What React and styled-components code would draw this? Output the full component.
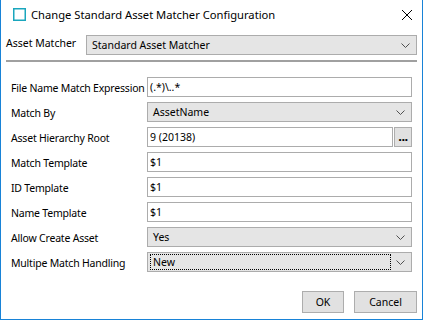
import React from 'react'
import styled, { createGlobalStyle } from 'styled-components'

const GlobalStyle = createGlobalStyle`
  html, body {
    margin: 0;
    padding: 0;
    background: #ffffff;
  }
  body {
    font-family: 'Noto Sans', 'Liberation Sans', sans-serif;
    font-size: 10.5px;
    color: #000000;
    white-space: nowrap;
  }
`

const Window = styled.div`
  box-sizing: border-box;
  width: 423px;
  height: 320px;
  background: #ffffff;
  border: 1px solid #1883d7;
  border-top: none;
  display: flex;
  flex-direction: column;
`

const TitleBar = styled.div`
  height: 29px;
  display: flex;
  align-items: center;
  padding: 0 10px 0 12px;
  flex-shrink: 0;
`

const TitleText = styled.div`
  flex: 1;
  margin-left: 5px;
  font-size: 11.2px;
  line-height: 16px;
  margin-top: 1px;
`

const CloseButton = styled.div`
  width: 10px;
  height: 10px;
  display: flex;
`

const Body = styled.div`
  flex: 1;
  display: flex;
  flex-direction: column;
  padding: 6px 5px 0 5px;
`

const TopRow = styled.div`
  display: flex;
  align-items: center;
  height: 20px;
`

const TopLabel = styled.div`
  width: 80px;
  line-height: 14px;
  margin-top: -5px;
`

const Separator = styled.div`
  height: 0;
  border-top: 2px solid #a0a0a0;
  margin: 5px 0 0 0;
`

const Form = styled.div`
  display: grid;
  grid-template-columns: 136px 265px;
  grid-auto-rows: 20px;
  row-gap: 5px;
  margin-top: 15px;
  padding-left: 5px;
  align-items: center;
`

const Label = styled.div`
  line-height: 14px;
  letter-spacing: -0.2px;
  margin-top: 2px;
`

const TextInput = styled.div`
  box-sizing: border-box;
  height: 20px;
  border: 1px solid #acacac;
  background: #ffffff;
  padding: 0 2px;
  display: flex;
  align-items: center;
  line-height: 14px;
  flex: ${p => (p.$grow ? 1 : 'none')};
`

const Combo = styled.div`
  box-sizing: border-box;
  height: 20px;
  border: 1px solid #acacac;
  background: #e5e5e5;
  display: flex;
  align-items: center;
  padding: 0 3px 0 2px;
  flex: 1;
`

const ComboValue = styled.div`
  flex: 1;
  box-sizing: border-box;
  height: 16px;
  line-height: 14px;
  padding: 0 0 0 2px;
  border: 1px dotted ${p => (p.$focused ? '#000000' : 'transparent')};
  margin-right: 2px;
`

const Chevron = styled.div`
  width: 15px;
  display: flex;
  justify-content: center;
  align-items: center;
`

const BrowseRow = styled.div`
  display: flex;
  gap: 1px;
  height: 20px;
`

const BrowseButton = styled.div`
  box-sizing: border-box;
  width: 18px;
  height: 20px;
  border: 1px solid #adadad;
  background: #e1e1e1;
  display: flex;
  align-items: flex-end;
  justify-content: center;
  font-weight: bold;
  font-size: 13px;
  line-height: 13px;
  padding-bottom: 3px;
  letter-spacing: -0.5px;
`

const Footer = styled.div`
  margin-top: auto;
  display: flex;
  justify-content: flex-end;
  gap: 10px;
  padding: 0 0 6px 0;
`

const Button = styled.div`
  box-sizing: border-box;
  width: ${p => p.$w}px;
  height: 22px;
  border: 1px solid #adadad;
  background: #e1e1e1;
  display: flex;
  align-items: center;
  justify-content: center;
`

const ChevronIcon = () => (
  <svg width="9" height="5" viewBox="0 0 9 5">
    <path d="M0.5 0.5 L4.5 4.5 L8.5 0.5" fill="none" stroke="#505050" strokeWidth="1" />
  </svg>
)

const ComboBox = ({ value, focused }) => (
  <Combo>
    <ComboValue $focused={focused}>{value}</ComboValue>
    <Chevron>
      <ChevronIcon />
    </Chevron>
  </Combo>
)

const rows = [
  { label: 'File Name Match Expression', kind: 'text', value: '(.*)\\..*' },
  { label: 'Match By', kind: 'combo', value: 'AssetName' },
  { label: 'Asset Hierarchy Root', kind: 'browse', value: '9 (20138)' },
  { label: 'Match Template', kind: 'text', value: '$1' },
  { label: 'ID Template', kind: 'text', value: '$1' },
  { label: 'Name Template', kind: 'text', value: '$1' },
  { label: 'Allow Create Asset', kind: 'combo', value: 'Yes' },
  { label: 'Multipe Match Handling', kind: 'combo', value: 'New', focused: true }
]

const Field = ({ row }) => {
  if (row.kind === 'combo') return <ComboBox value={row.value} focused={row.focused} />
  if (row.kind === 'browse')
    return (
      <BrowseRow>
        <TextInput $grow>{row.value}</TextInput>
        <BrowseButton>...</BrowseButton>
      </BrowseRow>
    )
  return <TextInput>{row.value}</TextInput>
}

export default function App() {
  return (
    <>
      <GlobalStyle />
      <Window>
        <TitleBar>
          <svg width="13" height="13" viewBox="0 0 13 13">
            <rect x="0.75" y="0.75" width="11.5" height="11.5" fill="none" stroke="#1aa6bd" strokeWidth="1.5" />
          </svg>
          <TitleText>Change Standard Asset Matcher Configuration</TitleText>
          <CloseButton>
            <svg width="10" height="10" viewBox="0 0 10 10">
              <path d="M0 0 L10 10 M10 0 L0 10" stroke="#000" strokeWidth="1" />
            </svg>
          </CloseButton>
        </TitleBar>
        <Body>
          <TopRow>
            <TopLabel>Asset Matcher</TopLabel>
            <ComboBox value="Standard Asset Matcher" />
          </TopRow>
          <Separator />
          <Form>
            {rows.map(row => (
              <React.Fragment key={row.label}>
                <Label>{row.label}</Label>
                <Field row={row} />
              </React.Fragment>
            ))}
          </Form>
          <Footer>
            <Button $w={42}>OK</Button>
            <Button $w={63}>Cancel</Button>
          </Footer>
        </Body>
      </Window>
    </>
  )
}
